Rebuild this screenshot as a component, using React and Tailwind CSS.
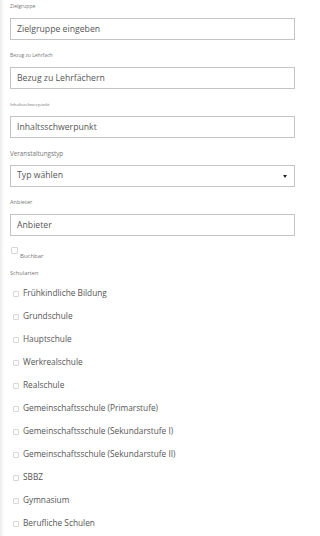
import { useState } from 'react';

const felder = [
  { label: 'Zielgruppe', placeholder: 'Zielgruppe eingeben', size: 'text-[5.1px]' },
  { label: 'Bezug zu Lehrfach', placeholder: 'Bezug zu Lehrfächern', size: 'text-[5px]' },
  { label: 'Inhaltsschwerpunkt', placeholder: 'Inhaltsschwerpunkt', size: 'text-[4.3px]' },
];

const schularten = [
  'Frühkindliche Bildung',
  'Grundschule',
  'Hauptschule',
  'Werkrealschule',
  'Realschule',
  'Gemeinschaftsschule (Primarstufe)',
  'Gemeinschaftsschule (Sekundarstufe I)',
  'Gemeinschaftsschule (Sekundarstufe II)',
  'SBBZ',
  'Gymnasium',
  'Berufliche Schulen',
];

function Feld({ label, size, children }) {
  return (
    <div className="mb-[11px]">
      <label className={`block ${size} leading-[9px] text-[#777] mb-[7px]`}>{label}</label>
      {children}
    </div>
  );
}

const inputClass =
  'block w-full h-[22px] px-[6px] border border-[#c4c4c4] bg-white text-[8.7px] text-[#555] placeholder:text-[#555] outline-none';

export default function App() {
  const [gewaehlt, setGewaehlt] = useState({});
  const [buchbar, setBuchbar] = useState(false);

  return (
    <div className="flex w-[300px] min-h-[536px] bg-white" style={{ fontFamily: '"Open Sans", "Noto Sans", sans-serif' }}>
      <div className="w-[4px] shrink-0 bg-gradient-to-r from-[#ececec] to-white" />
      <div className="flex-1 pl-[6px] pr-[5px] pt-[2px]">
        {felder.map((f) => (
          <Feld key={f.label} label={f.label} size={f.size}>
            <input type="text" placeholder={f.placeholder} className={inputClass} />
          </Feld>
        ))}

        <Feld label="Veranstaltungstyp" size="text-[6.3px]">
          <div className="relative">
            <select className={`${inputClass} appearance-none`} defaultValue="">
              <option value="">Typ wählen</option>
              <option value="seminar">Seminar</option>
              <option value="workshop">Workshop</option>
            </select>
            {/* Pfeil */}
            <svg className="absolute right-[8px] top-[10px] w-[4px] h-[3px]" viewBox="0 0 4 3">
              <path d="M0 0h4L2 3z" fill="#222" />
            </svg>
          </div>
        </Feld>

        <Feld label="Anbieter" size="text-[5.6px]">
          <input type="text" placeholder="Anbieter" className={inputClass} />
        </Feld>

        <label className="flex items-start pl-[1px] cursor-pointer">
          <input
            type="checkbox"
            checked={buchbar}
            onChange={(e) => setBuchbar(e.target.checked)}
            className="appearance-none w-[7px] h-[7px] border border-[#d6d6d6] rounded-[1px] bg-white checked:bg-[#555]"
          />
          <span className="ml-[2px] mt-[6px] text-[6px] leading-[7px] text-[#777]">Buchbar</span>
        </label>

        <div className="mt-[9px] text-[5.7px] leading-[9px] text-[#777]">Schularten</div>
        <ul className="mt-[4px]">
          {schularten.map((s) => (
            <li key={s} className="h-[23px] flex items-center pl-[3px]">
              <label className="flex items-center cursor-pointer">
                <input
                  type="checkbox"
                  checked={!!gewaehlt[s]}
                  onChange={() => setGewaehlt({ ...gewaehlt, [s]: !gewaehlt[s] })}
                  className="appearance-none w-[6px] h-[6px] border border-[#d6d6d6] rounded-[1px] bg-white checked:bg-[#555]"
                />
                <span className="ml-[4px] text-[8.3px] text-[#555]">{s}</span>
              </label>
            </li>
          ))}
        </ul>
      </div>
    </div>
  );
}
